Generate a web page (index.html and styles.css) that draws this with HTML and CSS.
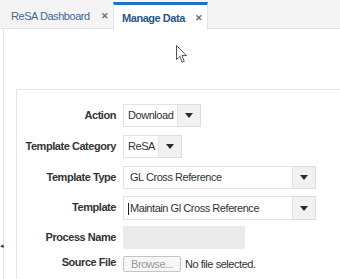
FILE: index.html
```html
<!DOCTYPE html>
<html lang="en">
<head>
  <meta charset="UTF-8">
  <title>Manage Data</title>
  <link rel="stylesheet" href="styles.css">
</head>
<body>
  <!-- tab bar -->
  <div class="tab-bar">
    <div class="tab">
      <span class="tab-label">ReSA Dashboard</span>
      <span class="tab-close">&#x2715;</span>
    </div>
    <div class="tab active">
      <span class="tab-label">Manage Data</span>
      <span class="tab-close">&#x2715;</span>
    </div>
  </div>

  <!-- panel -->
  <div class="panel">
    <div class="splitter">&#x25C2;</div>
    <div class="form-box">
      <div class="form-grid">
        <div class="label">Action</div>
        <div class="select">
          <div class="select-value w-download">Download</div>
          <div class="select-btn"><span class="tri"></span></div>
        </div>

        <div class="label">Template Category</div>
        <div class="select">
          <div class="select-value w-resa">ReSA</div>
          <div class="select-btn"><span class="tri"></span></div>
        </div>

        <div class="label">Template Type</div>
        <div class="select">
          <div class="select-value w-wide">GL Cross Reference</div>
          <div class="select-btn"><span class="tri"></span></div>
        </div>

        <div class="label">Template</div>
        <div class="select">
          <div class="select-value w-wide tall"><span class="caret"></span>Maintain Gl Cross Reference</div>
          <div class="select-btn tall"><span class="tri"></span></div>
        </div>

        <div class="label">Process Name</div>
        <div class="text-field"></div>

        <div class="label short">Source File</div>
        <div class="file-row">
          <span class="browse">Browse...</span>
          <span class="file-note">No file selected.</span>
        </div>
      </div>
    </div>
  </div>

  <!-- mouse pointer -->
  <svg class="pointer" width="12" height="19" viewBox="0 0 12 19">
    <path d="M0.5 0.5 L0.5 14.5 L3.8 11.4 L6.2 17.2 L8.3 16.3 L5.9 10.6 L10.5 10.6 Z" fill="#fff" stroke="#555" stroke-width="1"/>
  </svg>
</body>
</html>
```

FILE: styles.css
```css
html, body {
  margin: 0;
  padding: 0;
  background: #fff;
  font-family: "Liberation Sans", Arial, sans-serif;
  color: #333;
  overflow: hidden;
}

/* tabs */
.tab-bar {
  display: flex;
  height: 29px;
  background: #f4f4f4;
  border-bottom: 1px solid #e2e2e2;
  box-sizing: border-box;
}

.tab {
  display: flex;
  align-items: center;
  height: 27px;
  margin-top: 2px;
  padding: 0 0 0 11px;
  box-sizing: border-box;
  font-size: 11px;
  letter-spacing: -0.45px;
}

.tab .tab-label {
  color: #41698f;
  width: 90px;
}

.tab .tab-close {
  color: #6d6d6d;
  font-size: 9px;
  font-weight: bold;
  width: 12px;
}

.tab.active {
  padding-left: 8px;
  width: 95px;
  height: 28px;
  background: #fff;
  border-top: 3px solid #1d74c4;
  border-left: 1px solid #e4e4e4;
  border-right: 1px solid #e4e4e4;
  margin-bottom: -1px;
}

.tab.active .tab-label {
  color: #2b5684;
  font-weight: bold;
  width: 73px;
}

/* panel */
.panel {
  position: relative;
  margin-left: 3px;
  height: 250px;
  border-left: 1px solid #e4e4e4;
  padding: 60px 0 0 12px;
  box-sizing: border-box;
}

.splitter {
  position: absolute;
  left: -4px;
  top: 213px;
  font-size: 7px;
  color: #333;
}

.form-box {
  border-top: 1px solid #e6e6e6;
  border-left: 1px solid #e6e6e6;
  height: 175px;
  padding-top: 14px;
}

.form-grid {
  display: grid;
  grid-template-columns: 99px auto;
  grid-template-rows: 31px 31px 30px 30px 30px 16px;
  column-gap: 7px;
}

.label {
  text-align: right;
  font-size: 11px;
  letter-spacing: -0.45px;
  font-weight: bold;
  color: #333;
  line-height: 23px;
  height: 23px;
}

.label.short {
  line-height: 13px;
}

/* select controls */
.select {
  display: flex;
  height: 23px;
}

.select-value {
  box-sizing: border-box;
  height: 23px;
  border: 1px solid #e3e3e3;
  background: #fff;
  font-size: 11px;
  letter-spacing: -0.45px;
  color: #333;
  line-height: 21px;
  padding-left: 4px;
  white-space: nowrap;
}

.w-download { width: 55px; }
.w-resa { width: 36px; }
.w-wide { width: 170px; padding-left: 6px; }

.select-btn {
  box-sizing: border-box;
  width: 23px;
  height: 23px;
  border: 1px solid #dcdcdc;
  border-left: none;
  background: #f1f1f1;
  display: flex;
  align-items: center;
  justify-content: center;
}

.tall { height: 24px; line-height: 22px; }

.tri {
  width: 0;
  height: 0;
  border-left: 4px solid transparent;
  border-right: 4px solid transparent;
  border-top: 5px solid #2b2b2b;
}

.caret {
  display: inline-block;
  width: 1px;
  height: 12px;
  background: #222;
  vertical-align: middle;
  margin: 0 1px 0 -2px;
}

.text-field {
  width: 122px;
  height: 23px;
  background: #ebebeb;
}

/* file input */
.file-row {
  display: flex;
  align-items: center;
  height: 16px;
}

.browse {
  box-sizing: border-box;
  width: 58px;
  height: 16px;
  border: 1px solid #c4c4c4;
  border-radius: 2px;
  background: #f6f6f6;
  color: #999;
  font-size: 11px;
  letter-spacing: -0.45px;
  line-height: 14px;
  text-align: center;
}

.file-note {
  margin-left: 4px;
  font-size: 11px;
  letter-spacing: -0.45px;
  color: #333;
}

.pointer {
  position: absolute;
  left: 176px;
  top: 45px;
}
```
